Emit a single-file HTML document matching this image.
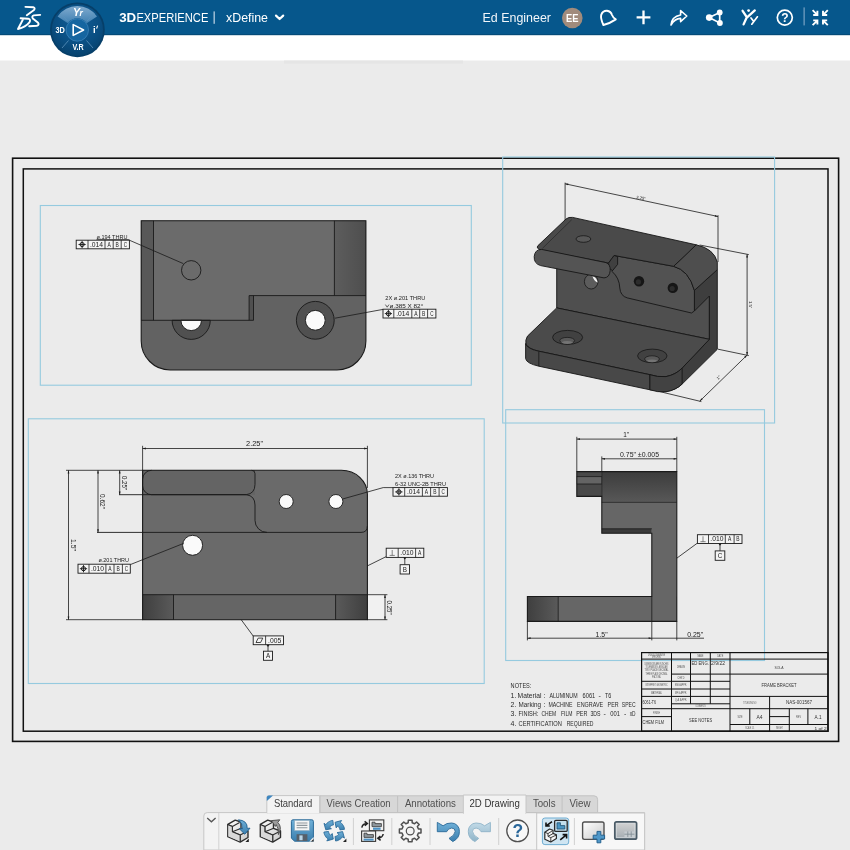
<!DOCTYPE html>
<html><head><meta charset="utf-8"><title>3DEXPERIENCE xDefine</title>
<style>
html,body{margin:0;padding:0;background:#ebebeb;}
body{width:850px;height:850px;overflow:hidden;font-family:'Liberation Sans', sans-serif;}
svg{display:block;}
svg text{font-family:'Liberation Sans', sans-serif;}
svg text.m{font-family:'Liberation Mono',monospace;}
</style></head><body>
<svg width="850" height="850" viewBox="0 0 850 850" style="will-change:transform">
<defs><radialGradient id="cg" cx="50%" cy="35%" r="70%"><stop offset="0" stop-color="#115c95"/><stop offset="0.6" stop-color="#0a4f83"/><stop offset="1" stop-color="#06406b"/></radialGradient><linearGradient id="ctop" x1="0" y1="0" x2="0" y2="1"><stop offset="0" stop-color="#8db4d6"/><stop offset="1" stop-color="#4585b6"/></linearGradient><linearGradient id="dk" x1="0" y1="0" x2="1" y2="0"><stop offset="0" stop-color="#3f3f3f"/><stop offset="1" stop-color="#5a5a5a"/></linearGradient><linearGradient id="dk2" x1="0" y1="0" x2="1" y2="0"><stop offset="0" stop-color="#5a5a5a"/><stop offset="1" stop-color="#3f3f3f"/></linearGradient><linearGradient id="dkv" x1="0" y1="0" x2="0" y2="1"><stop offset="0" stop-color="#3c3c3c"/><stop offset="1" stop-color="#585858"/></linearGradient><linearGradient id="dk3" x1="0" y1="0" x2="1" y2="0"><stop offset="0" stop-color="#5d5d5d"/><stop offset="1" stop-color="#4e4e4e"/></linearGradient></defs>
<rect x="0" y="0" width="850" height="850" fill="#ebebeb"/>
<rect x="0" y="35" width="850" height="25.5" fill="#ffffff"/>
<rect x="0" y="0" width="850" height="35" fill="#06578c"/>
<rect x="0" y="34" width="850" height="1.2" fill="#044a78"/>
<g fill="none" stroke="#ffffff" stroke-width="1.9" stroke-linecap="round" stroke-linejoin="round"><path d="M25.4 6.9 L33.2 7.2 Q35.6 7.8 34 10 L26.8 15.2"/><path d="M40.2 14.9 L33.8 15.4 Q31.4 16.2 32.8 18.4 L37.8 22.4 Q39.8 25 36.8 25.7 L29.2 26.3"/><path d="M20.6 18.3 L28.2 18.7 Q31.2 19.6 29.4 22.4 Q25.6 27.2 18 29 L22.8 19.8"/></g>
<circle cx="77.4" cy="29.8" r="27.4" fill="#063f69"/>
<circle cx="77.4" cy="29.8" r="25.6" fill="url(#cg)"/>
<path d="M57.6 16.4 A24 24 0 0 1 97 16.4 L86.7 23.2 A11.5 11.5 0 0 0 67.9 23.2 Z" fill="url(#ctop)" opacity="0.9"/>
<path d="M60 13 L67.5 21 M94.5 13 L87 21 M62 48 L68.5 40.5 M93 48 L86.5 40.5" stroke="#5d93bd" stroke-width="0.8" fill="none"/>
<circle cx="77.3" cy="30" r="11.2" fill="#1565a0" stroke="#3b82b8" stroke-width="0.8"/>
<path d="M73.2 24.6 L83.6 30 L73.2 35.4 Z" fill="none" stroke="#ffffff" stroke-width="1.6" stroke-linejoin="round"/>
<text x="60.2" y="33.2" font-size="9.6" fill="#ffffff" text-anchor="middle" textLength="9.4" lengthAdjust="spacingAndGlyphs" font-weight="bold">3D</text>
<text x="94.4" y="33.2" font-size="9.6" fill="#ffffff" text-anchor="middle" font-weight="bold">i</text>
<path d="M96.6 28.6 L97.6 25.6" stroke="#fff" stroke-width="1.1"/>
<text x="76.6" y="15.6" font-size="10.5" fill="#ffffff" text-anchor="middle" font-weight="bold" font-style="italic">Y</text>
<text x="81.2" y="16.4" font-size="8.5" fill="#ffffff" text-anchor="middle" font-weight="bold" font-style="italic">r</text>
<text x="78.0" y="49.8" font-size="9.2" fill="#ffffff" text-anchor="middle" textLength="11.2" lengthAdjust="spacingAndGlyphs" font-weight="bold">V.R</text>
<text x="119.2" y="22.2" font-size="13" fill="#ffffff" textLength="17.0" lengthAdjust="spacingAndGlyphs" font-weight="bold">3D</text>
<text x="136.4" y="22.2" font-size="13" fill="#ffffff" textLength="72.0" lengthAdjust="spacingAndGlyphs">EXPERIENCE</text>
<rect x="213.6" y="11.4" width="1.1" height="12.4" fill="#d5e2ee"/>
<text x="226.0" y="22.2" font-size="13" fill="#ffffff" textLength="42.0" lengthAdjust="spacingAndGlyphs">xDefine</text>
<path d="M276 15.6 L279.6 19 L283.2 15.6" fill="none" stroke="#fff" stroke-width="2.2" stroke-linecap="round" stroke-linejoin="round"/>
<text x="482.5" y="22.3" font-size="12.6" fill="#f2f6fa" textLength="68.5" lengthAdjust="spacingAndGlyphs">Ed Engineer</text>
<circle cx="572.3" cy="18" r="10.3" fill="#a18b7c"/>
<text x="572.3" y="22.0" font-size="10.5" fill="#ffffff" text-anchor="middle" textLength="12.5" lengthAdjust="spacingAndGlyphs" font-weight="bold">EE</text>
<path d="M603.4 25 Q600.4 18.6 601.2 14.8 Q602.8 10.6 607 10.8 Q611 11.4 612 15 Q613.2 18 615.8 19.4 Q610 23.4 603.4 25 Z" fill="none" stroke="#fff" stroke-width="1.9" stroke-linejoin="round"/>
<path d="M636.6 17.4 H650.4 M643.5 10.5 V24.3" stroke="#fff" stroke-width="2.3" fill="none"/>
<path d="M671 25 Q671.6 16.6 680.6 15 L680.6 10.6 L686.8 16 L680.6 21.6 L680.6 18.4 Q674.6 18.6 671 25 Z" fill="none" stroke="#fff" stroke-width="1.6" stroke-linejoin="round"/>
<path d="M709.2 17.6 L719.7 12.6 L719.7 22.9 Z" stroke="#fff" stroke-width="1.7" fill="none"/>
<circle cx="709.2" cy="17.6" r="3.3" fill="#fff"/><circle cx="719.7" cy="12.4" r="2.9" fill="#fff"/><circle cx="719.9" cy="23" r="2.9" fill="#fff"/>
<g fill="none" stroke="#fff" stroke-linecap="round" stroke-linejoin="round"><path d="M742.6 10.8 L746.8 17.2 L743.6 24.4 M754.8 10.4 L746.8 17.6" stroke-width="2.3"/><path d="M751 18 L753.2 20.8 M757.4 16.8 L751.8 24.2" stroke-width="1.7"/></g>
<circle cx="748.6" cy="10.6" r="1.4" fill="#fff"/>
<circle cx="784.8" cy="17.6" r="7.5" fill="none" stroke="#fff" stroke-width="1.7"/>
<text x="784.8" y="22.0" font-size="12" fill="#fff" text-anchor="middle" font-weight="bold">?</text>
<rect x="803.6" y="7.4" width="1" height="18" fill="#8fb2cf"/>
<g stroke="#fff" stroke-width="1.9" fill="none"><path d="M812.6 10.2 L817 14.6 M813.2 15 H817.4 V10.8"/><path d="M827.8 10.2 L823.4 14.6 M827.2 15 H823 V10.8"/><path d="M812.6 25.2 L817 20.8 M813.2 20.4 H817.4 V24.6"/><path d="M827.8 25.2 L823.4 20.8 M827.2 20.4 H823 V24.6"/></g>
<rect x="284.0" y="60.5" width="179.0" height="3.1" fill="#e5e5e5" stroke="none" stroke-width="0.8"/>
<rect x="12.6" y="158.2" width="826.0" height="583.2" fill="none" stroke="#111" stroke-width="1.6"/>
<rect x="23.3" y="168.9" width="804.7" height="562.3" fill="none" stroke="#111" stroke-width="1.5"/>
<rect x="40.3" y="205.5" width="431.0" height="179.7" fill="none" stroke="#95cadf" stroke-width="1.1"/>
<rect x="28.3" y="418.8" width="455.9" height="264.7" fill="none" stroke="#95cadf" stroke-width="1.1"/>
<rect x="502.7" y="157.0" width="271.9" height="266.0" fill="none" stroke="#95cadf" stroke-width="1.1"/>
<rect x="505.7" y="409.7" width="258.8" height="250.8" fill="none" stroke="#95cadf" stroke-width="1.1"/>
<g>
<path d="M141.2 220.8 H365.9 V341 A29 29 0 0 1 336.9 370 H170.2 A29 29 0 0 1 141.2 341 Z" fill="#626262"/>
<path d="M141.2 220.8 H365.9 V295.6 H253.5 V320.3 H141.2 Z" fill="#6b6b6b"/>
<rect x="141.2" y="220.8" width="12.3" height="99.5" fill="#585858" stroke="none" stroke-width="0.8"/>
<rect x="334.4" y="220.8" width="31.5" height="74.8" fill="url(#dk3)" stroke="none" stroke-width="0.8"/>
<rect x="249.1" y="295.6" width="4.4" height="24.7" fill="#505050" stroke="none" stroke-width="0.8"/>
<path d="M172.1 320.3 A19.1 19.1 0 0 0 210.3 320.3 Z" fill="#505050" stroke="#1a1a1a" stroke-width="0.9"/>
<path d="M180.9 320.3 A10.3 10.3 0 0 0 201.5 320.3 Z" fill="#fafafa" stroke="#1a1a1a" stroke-width="0.9"/>
<circle cx="315.3" cy="320.3" r="18.9" fill="#505050" stroke="#1a1a1a" stroke-width="0.9"/>
<circle cx="315.3" cy="320.3" r="9.9" fill="#fafafa" stroke="#1a1a1a" stroke-width="0.9"/>
<path d="M141.2 220.8 H365.9 V341 A29 29 0 0 1 336.9 370 H170.2 A29 29 0 0 1 141.2 341 Z" fill="none" stroke="#1a1a1a" stroke-width="1.1"/>
<path d="M153.5 220.8 V320.3 M141.2 320.3 H249.1 V295.6 H365.9 M253.5 295.6 V320.3 H249.1 M334.4 220.8 V295.6" fill="none" stroke="#1a1a1a" stroke-width="0.9"/>
<circle cx="191.2" cy="270.3" r="9.7" fill="#6b6b6b" stroke="#1a1a1a" stroke-width="0.9"/>
<text x="96.5" y="238.6" font-size="6.2" fill="#222" textLength="31.0" lengthAdjust="spacingAndGlyphs">ø.194 THRU</text>
<line x1="96.5" y1="239.6" x2="128.0" y2="239.6" stroke="#1a1a1a" stroke-width="0.7"/>
<line x1="128.0" y1="239.6" x2="183.3" y2="263.6" stroke="#1a1a1a" stroke-width="0.8"/>
<rect x="76.2" y="240.2" width="53.2" height="8.6" fill="#f4f4f4" stroke="#1a1a1a" stroke-width="0.9"/>
<line x1="88.0" y1="240.2" x2="88.0" y2="248.8" stroke="#1a1a1a" stroke-width="0.8"/>
<line x1="105.0" y1="240.2" x2="105.0" y2="248.8" stroke="#1a1a1a" stroke-width="0.8"/>
<line x1="113.2" y1="240.2" x2="113.2" y2="248.8" stroke="#1a1a1a" stroke-width="0.8"/>
<line x1="121.2" y1="240.2" x2="121.2" y2="248.8" stroke="#1a1a1a" stroke-width="0.8"/>
<circle cx="82.1" cy="244.5" r="2.1" fill="none" stroke="#1a1a1a" stroke-width="1"/>
<line x1="78.5" y1="244.5" x2="85.7" y2="244.5" stroke="#1a1a1a" stroke-width="0.9"/>
<line x1="82.1" y1="240.9" x2="82.1" y2="248.1" stroke="#1a1a1a" stroke-width="0.9"/>
<text x="96.5" y="246.8" font-size="6.3" fill="#222" text-anchor="middle" textLength="13.2" lengthAdjust="spacingAndGlyphs">.014</text>
<text x="109.1" y="246.8" font-size="6.3" fill="#222" text-anchor="middle" textLength="3.3" lengthAdjust="spacingAndGlyphs">A</text>
<text x="117.2" y="246.8" font-size="6.3" fill="#222" text-anchor="middle" textLength="3.3" lengthAdjust="spacingAndGlyphs">B</text>
<text x="125.3" y="246.8" font-size="6.3" fill="#222" text-anchor="middle" textLength="3.3" lengthAdjust="spacingAndGlyphs">C</text>
<text x="385.3" y="299.6" font-size="6.2" fill="#222" textLength="40.0" lengthAdjust="spacingAndGlyphs">2X ø.201 THRU</text>
<path d="M385.4 304.6 L387.2 307.2 L389 304.6" fill="none" stroke="#222" stroke-width="0.7"/>
<text x="389.6" y="307.6" font-size="6.2" fill="#222" textLength="33.6" lengthAdjust="spacingAndGlyphs">ø.385 X 82°</text>
<line x1="383.0" y1="309.4" x2="335.0" y2="318.2" stroke="#1a1a1a" stroke-width="0.8"/>
<rect x="383.0" y="309.2" width="52.9" height="8.8" fill="#f4f4f4" stroke="#1a1a1a" stroke-width="0.9"/>
<line x1="393.8" y1="309.2" x2="393.8" y2="318.0" stroke="#1a1a1a" stroke-width="0.8"/>
<line x1="411.8" y1="309.2" x2="411.8" y2="318.0" stroke="#1a1a1a" stroke-width="0.8"/>
<line x1="419.7" y1="309.2" x2="419.7" y2="318.0" stroke="#1a1a1a" stroke-width="0.8"/>
<line x1="427.6" y1="309.2" x2="427.6" y2="318.0" stroke="#1a1a1a" stroke-width="0.8"/>
<circle cx="388.4" cy="313.6" r="2.1" fill="none" stroke="#1a1a1a" stroke-width="1"/>
<line x1="384.8" y1="313.6" x2="392.0" y2="313.6" stroke="#1a1a1a" stroke-width="0.9"/>
<line x1="388.4" y1="310.0" x2="388.4" y2="317.2" stroke="#1a1a1a" stroke-width="0.9"/>
<text x="402.8" y="315.9" font-size="6.3" fill="#222" text-anchor="middle" textLength="13.2" lengthAdjust="spacingAndGlyphs">.014</text>
<text x="415.8" y="315.9" font-size="6.3" fill="#222" text-anchor="middle" textLength="3.3" lengthAdjust="spacingAndGlyphs">A</text>
<text x="423.6" y="315.9" font-size="6.3" fill="#222" text-anchor="middle" textLength="3.3" lengthAdjust="spacingAndGlyphs">B</text>
<text x="431.8" y="315.9" font-size="6.3" fill="#222" text-anchor="middle" textLength="3.3" lengthAdjust="spacingAndGlyphs">C</text>
</g>
<g>
<path d="M142.6 470.3 H341.4 A26 24 0 0 1 367.4 494.3 V619.7 H142.6 Z" fill="#6a6a6a"/>
<rect x="142.6" y="470.3" width="112.4" height="24.4" fill="#646464" stroke="none" stroke-width="0.8"/>
<rect x="142.6" y="594.7" width="224.8" height="25.0" fill="#656565" stroke="none" stroke-width="0.8"/>
<rect x="142.6" y="594.7" width="30.9" height="25.0" fill="url(#dk)" stroke="none" stroke-width="0.8"/>
<rect x="335.6" y="594.7" width="31.8" height="25.0" fill="url(#dk2)" stroke="none" stroke-width="0.8"/>
<rect x="367.4" y="594.7" width="17.6" height="25.0" fill="#f1f1f1" stroke="none" stroke-width="0.8"/>
<path d="M142.6 470.3 H341.4 A26 24 0 0 1 367.4 494.3 V619.7 H142.6 Z" fill="none" stroke="#1a1a1a" stroke-width="1.1"/>
<path d="M142.6 594.7 H367.4 M173.5 594.7 V619.7 M335.6 594.7 V619.7" fill="none" stroke="#1a1a1a" stroke-width="0.9"/>
<path d="M97 532.4 H361 Q367.4 532.4 367.4 526" fill="none" stroke="#1a1a1a" stroke-width="0.9"/>
<path d="M119 494.7 H246.2" fill="none" stroke="#1a1a1a" stroke-width="0.9"/>
<path d="M246.2 494.7 H151.6 A9 9 0 0 1 142.6 485.7 V479.3 A9 9 0 0 1 151.6 470.3" fill="none" stroke="#1a1a1a" stroke-width="0.9"/>
<path d="M251.6 470.3 Q255 470.3 255 473.7 V484.4 Q255 493.6 246.2 494.7 Q255 495.8 255 505 V520.4 A12 12 0 0 0 267 532.4" fill="none" stroke="#1a1a1a" stroke-width="0.9"/>
<circle cx="192.6" cy="545.3" r="10" fill="#fafafa" stroke="#1a1a1a" stroke-width="0.9"/>
<circle cx="286.2" cy="501.5" r="7" fill="#fafafa" stroke="#1a1a1a" stroke-width="0.9"/>
<circle cx="335.9" cy="501.5" r="7" fill="#fafafa" stroke="#1a1a1a" stroke-width="0.9"/>
<line x1="142.6" y1="445.8" x2="142.6" y2="470.3" stroke="#1a1a1a" stroke-width="0.8"/>
<line x1="367.4" y1="445.8" x2="367.4" y2="488.0" stroke="#1a1a1a" stroke-width="0.8"/>
<line x1="142.6" y1="448.5" x2="367.4" y2="448.5" stroke="#1a1a1a" stroke-width="0.8"/><path d="M142.6 448.5 L145.8 447.6 L145.8 449.4 Z" fill="#1a1a1a"/><path d="M367.4 448.5 L364.2 449.4 L364.2 447.6 Z" fill="#1a1a1a"/>
<text x="254.6" y="446.4" font-size="6.6" fill="#222" text-anchor="middle" textLength="17.0" lengthAdjust="spacingAndGlyphs">2.25"</text>
<line x1="66.0" y1="470.3" x2="142.6" y2="470.3" stroke="#1a1a1a" stroke-width="0.8"/>
<line x1="66.0" y1="619.7" x2="142.6" y2="619.7" stroke="#1a1a1a" stroke-width="0.8"/>
<line x1="68.5" y1="470.3" x2="68.5" y2="619.7" stroke="#1a1a1a" stroke-width="0.8"/><path d="M68.5 470.3 L69.4 473.5 L67.6 473.5 Z" fill="#1a1a1a"/><path d="M68.5 619.7 L67.6 616.5 L69.4 616.5 Z" fill="#1a1a1a"/>
<text x="70.6" y="545.0" font-size="6.4" fill="#222" text-anchor="middle" textLength="12.0" lengthAdjust="spacingAndGlyphs" transform="rotate(90 70.6 545.0)">1.5"</text>
<line x1="98.0" y1="470.3" x2="98.0" y2="532.4" stroke="#1a1a1a" stroke-width="0.8"/><path d="M98.0 470.3 L98.9 473.5 L97.1 473.5 Z" fill="#1a1a1a"/><path d="M98.0 532.4 L97.1 529.2 L98.9 529.2 Z" fill="#1a1a1a"/>
<text x="100.4" y="501.5" font-size="6.4" fill="#222" text-anchor="middle" textLength="15.0" lengthAdjust="spacingAndGlyphs" transform="rotate(90 100.4 501.5)">0.62"</text>
<line x1="119.7" y1="470.3" x2="119.7" y2="494.7" stroke="#1a1a1a" stroke-width="0.8"/><path d="M119.7 470.3 L120.6 473.5 L118.8 473.5 Z" fill="#1a1a1a"/><path d="M119.7 494.7 L118.8 491.5 L120.6 491.5 Z" fill="#1a1a1a"/>
<text x="122.0" y="483.0" font-size="6.4" fill="#222" text-anchor="middle" textLength="14.0" lengthAdjust="spacingAndGlyphs" transform="rotate(90 122.0 483.0)">0.25"</text>
<line x1="367.4" y1="594.7" x2="387.4" y2="594.7" stroke="#1a1a1a" stroke-width="0.8"/>
<line x1="367.4" y1="619.7" x2="387.4" y2="619.7" stroke="#1a1a1a" stroke-width="0.8"/>
<line x1="385.0" y1="594.7" x2="385.0" y2="619.7" stroke="#1a1a1a" stroke-width="0.8"/><path d="M385.0 594.7 L385.9 597.9 L384.1 597.9 Z" fill="#1a1a1a"/><path d="M385.0 619.7 L384.1 616.5 L385.9 616.5 Z" fill="#1a1a1a"/>
<text x="387.4" y="607.6" font-size="6.4" fill="#222" text-anchor="middle" textLength="14.0" lengthAdjust="spacingAndGlyphs" transform="rotate(90 387.4 607.6)">0.25"</text>
<text x="98.5" y="562.4" font-size="6.2" fill="#222" textLength="30.5" lengthAdjust="spacingAndGlyphs">ø.201 THRU</text>
<line x1="130.3" y1="564.6" x2="183.6" y2="543.4" stroke="#1a1a1a" stroke-width="0.8"/>
<rect x="78.0" y="564.2" width="52.3" height="9.0" fill="#f4f4f4" stroke="#1a1a1a" stroke-width="0.9"/>
<line x1="89.0" y1="564.2" x2="89.0" y2="573.2" stroke="#1a1a1a" stroke-width="0.8"/>
<line x1="105.9" y1="564.2" x2="105.9" y2="573.2" stroke="#1a1a1a" stroke-width="0.8"/>
<line x1="114.0" y1="564.2" x2="114.0" y2="573.2" stroke="#1a1a1a" stroke-width="0.8"/>
<line x1="122.4" y1="564.2" x2="122.4" y2="573.2" stroke="#1a1a1a" stroke-width="0.8"/>
<circle cx="83.5" cy="568.7" r="2.1" fill="none" stroke="#1a1a1a" stroke-width="1"/>
<line x1="79.9" y1="568.7" x2="87.1" y2="568.7" stroke="#1a1a1a" stroke-width="0.9"/>
<line x1="83.5" y1="565.1" x2="83.5" y2="572.3" stroke="#1a1a1a" stroke-width="0.9"/>
<text x="97.5" y="571.0" font-size="6.3" fill="#222" text-anchor="middle" textLength="13.2" lengthAdjust="spacingAndGlyphs">.010</text>
<text x="110.0" y="571.0" font-size="6.3" fill="#222" text-anchor="middle" textLength="3.3" lengthAdjust="spacingAndGlyphs">A</text>
<text x="118.2" y="571.0" font-size="6.3" fill="#222" text-anchor="middle" textLength="3.3" lengthAdjust="spacingAndGlyphs">B</text>
<text x="126.4" y="571.0" font-size="6.3" fill="#222" text-anchor="middle" textLength="3.3" lengthAdjust="spacingAndGlyphs">C</text>
<line x1="241.2" y1="619.7" x2="253.2" y2="636.0" stroke="#1a1a1a" stroke-width="0.8"/>
<rect x="253.2" y="635.9" width="30.3" height="8.8" fill="#f4f4f4" stroke="#1a1a1a" stroke-width="0.9"/>
<line x1="265.6" y1="635.9" x2="265.6" y2="644.7" stroke="#1a1a1a" stroke-width="0.8"/>
<path d="M256.0 642.5 L258.2 638.1 L262.8 638.1 L260.6 642.5 Z" fill="none" stroke="#1a1a1a" stroke-width="0.8"/>
<text x="274.6" y="642.6" font-size="6.3" fill="#222" text-anchor="middle" textLength="13.2" lengthAdjust="spacingAndGlyphs">.005</text>
<line x1="268.0" y1="644.7" x2="268.0" y2="651.2" stroke="#1a1a1a" stroke-width="0.8"/>
<path d="M266.4 644.7 L269.6 644.7 L268.0 646.9 Z" fill="#1a1a1a"/>
<rect x="263.5" y="651.2" width="9.0" height="9.1" fill="#f4f4f4" stroke="#1a1a1a" stroke-width="0.9"/>
<text x="268.0" y="658.0" font-size="6.3" fill="#222" text-anchor="middle">A</text>
<text x="395.0" y="478.2" font-size="6.2" fill="#222" textLength="39.0" lengthAdjust="spacingAndGlyphs">2X ø.136 THRU</text>
<text x="395.0" y="486.2" font-size="6.2" fill="#222" textLength="51.0" lengthAdjust="spacingAndGlyphs">6-32 UNC-2B THRU</text>
<line x1="393.0" y1="487.6" x2="383.2" y2="487.6" stroke="#1a1a1a" stroke-width="0.8"/>
<line x1="383.2" y1="487.6" x2="342.6" y2="499.0" stroke="#1a1a1a" stroke-width="0.8"/>
<rect x="393.0" y="487.6" width="54.4" height="8.6" fill="#f4f4f4" stroke="#1a1a1a" stroke-width="0.9"/>
<line x1="404.7" y1="487.6" x2="404.7" y2="496.2" stroke="#1a1a1a" stroke-width="0.8"/>
<line x1="422.4" y1="487.6" x2="422.4" y2="496.2" stroke="#1a1a1a" stroke-width="0.8"/>
<line x1="430.6" y1="487.6" x2="430.6" y2="496.2" stroke="#1a1a1a" stroke-width="0.8"/>
<line x1="439.1" y1="487.6" x2="439.1" y2="496.2" stroke="#1a1a1a" stroke-width="0.8"/>
<circle cx="398.9" cy="491.9" r="2.1" fill="none" stroke="#1a1a1a" stroke-width="1"/>
<line x1="395.2" y1="491.9" x2="402.5" y2="491.9" stroke="#1a1a1a" stroke-width="0.9"/>
<line x1="398.9" y1="488.3" x2="398.9" y2="495.5" stroke="#1a1a1a" stroke-width="0.9"/>
<text x="413.5" y="494.2" font-size="6.3" fill="#222" text-anchor="middle" textLength="13.2" lengthAdjust="spacingAndGlyphs">.014</text>
<text x="426.5" y="494.2" font-size="6.3" fill="#222" text-anchor="middle" textLength="3.3" lengthAdjust="spacingAndGlyphs">A</text>
<text x="434.9" y="494.2" font-size="6.3" fill="#222" text-anchor="middle" textLength="3.3" lengthAdjust="spacingAndGlyphs">B</text>
<text x="443.2" y="494.2" font-size="6.3" fill="#222" text-anchor="middle" textLength="3.3" lengthAdjust="spacingAndGlyphs">C</text>
<line x1="367.4" y1="565.9" x2="386.2" y2="556.6" stroke="#1a1a1a" stroke-width="0.8"/>
<rect x="386.2" y="548.2" width="37.6" height="9.2" fill="#f4f4f4" stroke="#1a1a1a" stroke-width="0.9"/>
<line x1="398.2" y1="548.2" x2="398.2" y2="557.4" stroke="#1a1a1a" stroke-width="0.8"/>
<line x1="415.6" y1="548.2" x2="415.6" y2="557.4" stroke="#1a1a1a" stroke-width="0.8"/>
<line x1="389.6" y1="555.4" x2="394.8" y2="555.4" stroke="#555" stroke-width="0.7"/>
<line x1="392.2" y1="550.0" x2="392.2" y2="555.4" stroke="#555" stroke-width="0.7"/>
<text x="406.9" y="555.1" font-size="6.3" fill="#222" text-anchor="middle" textLength="13.2" lengthAdjust="spacingAndGlyphs">.010</text>
<text x="419.7" y="555.1" font-size="6.3" fill="#222" text-anchor="middle" textLength="3.3" lengthAdjust="spacingAndGlyphs">A</text>
<line x1="404.8" y1="557.4" x2="404.8" y2="564.7" stroke="#1a1a1a" stroke-width="0.8"/>
<path d="M403.2 557.4 L406.4 557.4 L404.8 559.6 Z" fill="#1a1a1a"/>
<rect x="400.1" y="564.7" width="9.4" height="9.3" fill="#f4f4f4" stroke="#1a1a1a" stroke-width="0.9"/>
<text x="404.8" y="571.6" font-size="6.3" fill="#222" text-anchor="middle">B</text>
</g>
<g>
<rect x="576.8" y="471.6" width="25.0" height="24.8" fill="#494949" stroke="none" stroke-width="0.8"/>
<rect x="576.8" y="476.6" width="25.0" height="7.4" fill="#646464" stroke="none" stroke-width="0.8"/>
<rect x="601.8" y="471.6" width="75.0" height="30.8" fill="url(#dkv)" stroke="none" stroke-width="0.8"/>
<rect x="601.8" y="502.4" width="75.0" height="26.6" fill="#666666" stroke="none" stroke-width="0.8"/>
<rect x="651.8" y="529.0" width="25.0" height="92.4" fill="#666666" stroke="none" stroke-width="0.8"/>
<rect x="601.8" y="528.8" width="50.0" height="4.5" fill="#3a3a3a" stroke="none" stroke-width="0.8"/>
<rect x="527.4" y="596.5" width="149.4" height="24.9" fill="#666666" stroke="none" stroke-width="0.8"/>
<rect x="527.4" y="596.5" width="30.8" height="24.9" fill="url(#dk)" stroke="none" stroke-width="0.8"/>
<path d="M576.8 471.6 H676.8 V621.4 H527.4 V596.5 H651.8 V533.3 H601.8 V496.4 H576.8 Z" fill="none" stroke="#1a1a1a" stroke-width="1.1"/>
<path d="M576.8 476.6 H601.8 M576.8 484 H601.8 M601.8 471.6 V496.4 M601.8 502.4 H676.8 M601.8 528.8 H651.8 M558.2 596.5 V621.4 M651.8 596.5 V621.4" fill="none" stroke="#1a1a1a" stroke-width="0.8"/>
<line x1="576.8" y1="436.8" x2="576.8" y2="471.6" stroke="#1a1a1a" stroke-width="0.8"/>
<line x1="676.8" y1="436.8" x2="676.8" y2="471.6" stroke="#1a1a1a" stroke-width="0.8"/>
<line x1="601.8" y1="456.4" x2="601.8" y2="471.6" stroke="#1a1a1a" stroke-width="0.8"/>
<line x1="576.8" y1="439.1" x2="676.8" y2="439.1" stroke="#1a1a1a" stroke-width="0.8"/><path d="M576.8 439.1 L580.0 438.2 L580.0 440.0 Z" fill="#1a1a1a"/><path d="M676.8 439.1 L673.6 440.0 L673.6 438.2 Z" fill="#1a1a1a"/>
<text x="626.2" y="436.8" font-size="6.4" fill="#222" text-anchor="middle">1"</text>
<line x1="601.8" y1="458.8" x2="676.8" y2="458.8" stroke="#1a1a1a" stroke-width="0.8"/><path d="M601.8 458.8 L605.0 457.9 L605.0 459.7 Z" fill="#1a1a1a"/><path d="M676.8 458.8 L673.6 459.7 L673.6 457.9 Z" fill="#1a1a1a"/>
<text x="639.5" y="457.4" font-size="6.4" fill="#222" text-anchor="middle" textLength="39.0" lengthAdjust="spacingAndGlyphs">0.75" ±0.005</text>
<line x1="527.4" y1="621.4" x2="527.4" y2="640.4" stroke="#1a1a1a" stroke-width="0.8"/>
<line x1="651.8" y1="621.4" x2="651.8" y2="640.4" stroke="#1a1a1a" stroke-width="0.8"/>
<line x1="676.8" y1="621.4" x2="676.8" y2="640.4" stroke="#1a1a1a" stroke-width="0.8"/>
<line x1="527.4" y1="638.2" x2="651.8" y2="638.2" stroke="#1a1a1a" stroke-width="0.8"/><path d="M527.4 638.2 L530.6 637.3 L530.6 639.1 Z" fill="#1a1a1a"/><path d="M651.8 638.2 L648.6 639.1 L648.6 637.3 Z" fill="#1a1a1a"/>
<line x1="651.8" y1="638.2" x2="704.0" y2="638.2" stroke="#1a1a1a" stroke-width="0.8"/>
<text x="601.6" y="636.8" font-size="6.4" fill="#222" text-anchor="middle" textLength="12.0" lengthAdjust="spacingAndGlyphs">1.5"</text>
<text x="695.2" y="636.8" font-size="6.4" fill="#222" text-anchor="middle" textLength="16.0" lengthAdjust="spacingAndGlyphs">0.25"</text>
<line x1="676.8" y1="558.2" x2="697.4" y2="543.1" stroke="#1a1a1a" stroke-width="0.8"/>
<rect x="697.4" y="534.7" width="44.6" height="8.8" fill="#f4f4f4" stroke="#1a1a1a" stroke-width="0.9"/>
<line x1="708.5" y1="534.7" x2="708.5" y2="543.5" stroke="#1a1a1a" stroke-width="0.8"/>
<line x1="725.3" y1="534.7" x2="725.3" y2="543.5" stroke="#1a1a1a" stroke-width="0.8"/>
<line x1="734.1" y1="534.7" x2="734.1" y2="543.5" stroke="#1a1a1a" stroke-width="0.8"/>
<line x1="700.4" y1="541.7" x2="705.6" y2="541.7" stroke="#555" stroke-width="0.7"/>
<line x1="703.0" y1="536.3" x2="703.0" y2="541.7" stroke="#555" stroke-width="0.7"/>
<text x="716.9" y="541.4" font-size="6.3" fill="#222" text-anchor="middle" textLength="13.2" lengthAdjust="spacingAndGlyphs">.010</text>
<text x="729.7" y="541.4" font-size="6.3" fill="#222" text-anchor="middle" textLength="3.3" lengthAdjust="spacingAndGlyphs">A</text>
<text x="738.0" y="541.4" font-size="6.3" fill="#222" text-anchor="middle" textLength="3.3" lengthAdjust="spacingAndGlyphs">B</text>
<line x1="720.0" y1="543.5" x2="720.0" y2="550.9" stroke="#1a1a1a" stroke-width="0.8"/>
<path d="M718.4 543.5 L721.6 543.5 L720.0 545.7 Z" fill="#1a1a1a"/>
<rect x="715.2" y="550.9" width="9.6" height="9.4" fill="#f4f4f4" stroke="#1a1a1a" stroke-width="0.9"/>
<text x="720.0" y="557.9" font-size="6.3" fill="#222" text-anchor="middle">C</text>
</g>
<text y="688.4" font-size="7" fill="#2a2a2a"><tspan x="510.6" textLength="20.8" lengthAdjust="spacingAndGlyphs">NOTES:</tspan></text>
<text y="697.7" font-size="7" fill="#2a2a2a"><tspan x="510.6">1.</tspan> <tspan x="517.6" textLength="23.9" lengthAdjust="spacingAndGlyphs">Material</tspan> <tspan x="543.6">:</tspan> <tspan x="549.4" textLength="28.2" lengthAdjust="spacingAndGlyphs">ALUMINUM</tspan> <tspan x="582.6" textLength="12.7" lengthAdjust="spacingAndGlyphs">6061</tspan> <tspan x="598.4">-</tspan> <tspan x="605.0" textLength="6.4" lengthAdjust="spacingAndGlyphs">T6</tspan></text>
<text y="707.0" font-size="7" fill="#2a2a2a"><tspan x="510.6">2.</tspan> <tspan x="518.5" textLength="22.5" lengthAdjust="spacingAndGlyphs">Marking</tspan> <tspan x="543.6">:</tspan> <tspan x="548.5" textLength="23.9" lengthAdjust="spacingAndGlyphs">MACHINE</tspan> <tspan x="577.1" textLength="26.1" lengthAdjust="spacingAndGlyphs">ENGRAVE</tspan> <tspan x="607.6" textLength="11.0" lengthAdjust="spacingAndGlyphs">PER</tspan> <tspan x="621.8" textLength="13.8" lengthAdjust="spacingAndGlyphs">SPEC</tspan></text>
<text y="716.3" font-size="7" fill="#2a2a2a"><tspan x="510.6">3.</tspan> <tspan x="518.5" textLength="19.9" lengthAdjust="spacingAndGlyphs">FINISH:</tspan> <tspan x="541.5" textLength="14.6" lengthAdjust="spacingAndGlyphs">CHEM</tspan> <tspan x="560.9" textLength="11.5" lengthAdjust="spacingAndGlyphs">FILM</tspan> <tspan x="576.2" textLength="11.2" lengthAdjust="spacingAndGlyphs">PER</tspan> <tspan x="590.4" textLength="10.2" lengthAdjust="spacingAndGlyphs">3DS</tspan> <tspan x="603.6">-</tspan> <tspan x="610.3" textLength="9.7" lengthAdjust="spacingAndGlyphs">001</tspan> <tspan x="624.0">-</tspan> <tspan x="629.7" textLength="5.9" lengthAdjust="spacingAndGlyphs">xD</tspan></text>
<text y="725.7" font-size="7" fill="#2a2a2a"><tspan x="510.6">4.</tspan> <tspan x="518.5" textLength="43.3" lengthAdjust="spacingAndGlyphs">CERTIFICATION</tspan> <tspan x="566.7" textLength="26.8" lengthAdjust="spacingAndGlyphs">REQUIRED</tspan></text>
<g stroke-linejoin="round">
<line x1="565.1" y1="182.6" x2="565.1" y2="222.0" stroke="#1a1a1a" stroke-width="0.8"/>
<line x1="718.0" y1="215.2" x2="718.0" y2="262.0" stroke="#1a1a1a" stroke-width="0.8"/>
<line x1="565.1" y1="183.8" x2="718.0" y2="216.5" stroke="#1a1a1a" stroke-width="0.8"/><path d="M565.1 183.8 L568.4 183.6 L568.0 185.3 Z" fill="#1a1a1a"/><path d="M718.0 216.5 L714.7 216.7 L715.1 215.0 Z" fill="#1a1a1a"/>
<text x="640.8" y="199.4" font-size="4.2" fill="#222" text-anchor="middle" transform="rotate(12 640.8 199.4)">2.25"</text>
<line x1="699.7" y1="245.0" x2="748.8" y2="254.6" stroke="#1a1a1a" stroke-width="0.8"/>
<line x1="718.0" y1="349.2" x2="748.8" y2="355.6" stroke="#1a1a1a" stroke-width="0.8"/>
<line x1="747.1" y1="254.3" x2="747.1" y2="355.1" stroke="#1a1a1a" stroke-width="0.8"/><path d="M747.1 254.3 L748.0 257.5 L746.2 257.5 Z" fill="#1a1a1a"/><path d="M747.1 355.1 L746.2 351.9 L748.0 351.9 Z" fill="#1a1a1a"/>
<text x="749.0" y="304.6" font-size="4.2" fill="#222" text-anchor="middle" transform="rotate(90 749.0 304.6)">1.5"</text>
<line x1="656.8" y1="390.9" x2="701.4" y2="401.6" stroke="#1a1a1a" stroke-width="0.8"/>
<line x1="699.7" y1="401.2" x2="747.1" y2="355.1" stroke="#1a1a1a" stroke-width="0.8"/><path d="M699.7 401.2 L701.4 398.3 L702.6 399.6 Z" fill="#1a1a1a"/><path d="M747.1 355.1 L745.4 358.0 L744.2 356.7 Z" fill="#1a1a1a"/>
<text x="719.6" y="378.6" font-size="4.2" fill="#222" text-anchor="middle" transform="rotate(-45 719.6 378.6)">1"</text>
<path d="M556.7 258 L616 262 L709.4 296 L709.4 339.3 L556.7 307.9 Z" fill="#4f4f4f" stroke="#161616" stroke-width="0.9"/>
<path d="M694.4 290.4 L717.3 269.6 L717.3 349.3 L682.1 384.1 Q676 390 666 391.6 L649.9 389.8 L649.9 374.7 L682.1 368.1 L709.4 339.3 L709.4 296 L694.4 311 Z" fill="#3e3e3e" stroke="#161616" stroke-width="0.9"/>
<path d="M556.7 307.9 L709.4 339.3 L682.1 368.1 Q676 374.6 666 376.6 Q657 377.2 649.9 374.7 L538.8 351.2 Q529 349 526 344.4 Q525 340 527.5 336.1 Z" fill="#4b4b4b" stroke="#161616" stroke-width="0.9"/>
<path d="M525.6 343.5 Q527 349 538.8 351.2 L649.9 374.7 L649.9 389.8 L538.8 366.2 Q526.5 363.4 525.6 358.6 Z" fill="#484848" stroke="#161616" stroke-width="0.9"/>
<path d="M649.9 374.7 Q657 377.2 666 376.6 Q676 374.6 682.1 368.1 L682.1 384.1 Q676 390 666 391.8 Q657 392.4 649.9 389.8 Z" fill="#424242" stroke="#161616" stroke-width="0.9"/>
<line x1="538.8" y1="351.2" x2="538.8" y2="366.2" stroke="#161616" stroke-width="0.8"/>
<ellipse cx="567.6" cy="337.4" rx="15" ry="7" fill="#414141" stroke="#161616" stroke-width="0.8"/>
<ellipse cx="567.2" cy="340.6" rx="7.4" ry="3.2" fill="#5a5a5a" stroke="#161616" stroke-width="0.7"/>
<path d="M561 342.4 Q567.2 339.6 573.4 342.4 Q567.2 345.4 561 342.4 Z" fill="#747474"/>
<ellipse cx="652.3" cy="355.9" rx="14.7" ry="6.8" fill="#414141" stroke="#161616" stroke-width="0.8"/>
<ellipse cx="652" cy="359" rx="7.4" ry="3.2" fill="#5a5a5a" stroke="#161616" stroke-width="0.7"/>
<path d="M645.8 360.8 Q652 358 658.2 360.8 Q652 363.8 645.8 360.8 Z" fill="#747474"/>
<ellipse cx="591.2" cy="281.6" rx="6.8" ry="7.4" fill="#5c5c5c" stroke="#161616" stroke-width="0.8"/>
<path d="M592.4 276.2 Q597 277.4 597.6 282.4 Q594.4 281.4 592.4 276.2 Z" fill="#f4f4f4"/>
<path d="M614.1 255.5 L673.6 266.3 Q689 270.4 694.4 290.4 L694.4 311 L691.5 313 L627.3 297.9 Q620.4 296 619.8 288 Q619.4 278 612.2 271.6 Z" fill="#525252" stroke="#161616" stroke-width="0.9"/>
<circle cx="639" cy="281.3" r="5.2" fill="#161616"/><circle cx="672.8" cy="287.9" r="5.2" fill="#161616"/>
<circle cx="638.4" cy="281.9" r="2.6" fill="#2c2c2c"/><circle cx="672.2" cy="288.5" r="2.6" fill="#2c2c2c"/>
<path d="M696.2 244.8 Q714 248.6 717.3 262.1 L717.3 269.6 L694.4 290.4 Q689 270.4 673.6 266.3 Z" fill="#4e4e4e" stroke="#161616" stroke-width="0.9"/>
<path d="M572.6 217.4 L696.2 244.8 L673.6 266.3 L614.1 255.5 L608.5 263.1 L541 250 Q535.6 248.4 538 245.6 L566 219 Q568.6 216.8 572.6 217.4 Z" fill="#4a4a4a" stroke="#161616" stroke-width="0.9"/>
<line x1="571.8" y1="219.6" x2="542.4" y2="248.4" stroke="#262626" stroke-width="0.7"/>
<ellipse cx="583.4" cy="239" rx="7.4" ry="3.3" fill="#585858" stroke="#161616" stroke-width="0.8"/>
<path d="M608.5 263.1 L614.1 255.5 L617.6 256.6 L617.6 264.4 L612.6 270.6 L609.4 268.6 Z" fill="#404040" stroke="#161616" stroke-width="0.9"/>
<path d="M541.6 249.4 L606 262.6 Q610.6 264.4 610.2 270.6 Q609.6 277.6 604 277.9 L540.6 265.6 Q533.8 263.6 534.2 256.6 Q534.8 249.4 541.6 249.4 Z" fill="#545454" stroke="#161616" stroke-width="0.9"/>
</g>
<g>
<rect x="641.6" y="652.6" width="186.4" height="78.6" fill="none" stroke="#111" stroke-width="1.2"/>
<path d="M671.5 652.6 V731.2 M690.5 652.6 V703.8 M710.3 652.6 V703.8 M730.0 652.6 V731.2 M641.6 659.1 H671.5 M641.6 681.3 H671.5 M641.6 689.0 H671.5 M641.6 696.4 H671.5 M641.6 708.7 H671.5 M641.6 716.6 H671.5 M671.5 659.1 H730.0 M671.5 674.1 H730.0 M671.5 681.3 H730.0 M671.5 689.0 H730.0 M671.5 696.4 H730.0 M671.5 703.8 H730.0 M671.5 708.7 H730.0 M730.0 659.1 H828.0 M730.0 674.1 H828.0 M730.0 696.4 H828.0 M730.0 708.7 H828.0 M730.0 724.5 H828.0 M769.6 696.4 V731.2 M749.8 708.7 V724.5 M789.3 708.7 V731.2 M807.9 708.7 V724.5 M769.6 716.6 H789.3" fill="none" stroke="#111" stroke-width="1"/>
<text x="656.5" y="655.6" font-size="2.6" fill="#555" text-anchor="middle" textLength="17.0" lengthAdjust="spacingAndGlyphs">UNLESS OTHERWISE</text>
<text x="656.5" y="658.2" font-size="2.6" fill="#555" text-anchor="middle" textLength="9.0" lengthAdjust="spacingAndGlyphs">SPECIFIED</text>
<text x="656.5" y="664.6" font-size="2.6" fill="#555" text-anchor="middle" textLength="24.0" lengthAdjust="spacingAndGlyphs">DIMENSIONS ARE IN INCHES</text>
<text x="656.5" y="668.0" font-size="2.6" fill="#555" text-anchor="middle" textLength="22.0" lengthAdjust="spacingAndGlyphs">TOLERANCES: ANGULAR</text>
<text x="656.5" y="671.4" font-size="2.6" fill="#555" text-anchor="middle" textLength="24.0" lengthAdjust="spacingAndGlyphs">TWO PLACE DECIMAL</text>
<text x="656.5" y="674.8" font-size="2.6" fill="#555" text-anchor="middle" textLength="22.0" lengthAdjust="spacingAndGlyphs">THREE PLACE DECIMAL</text>
<text x="656.5" y="678.2" font-size="2.6" fill="#555" text-anchor="middle" textLength="9.0" lengthAdjust="spacingAndGlyphs">FRACTIONAL</text>
<text x="656.5" y="686.4" font-size="2.6" fill="#555" text-anchor="middle" textLength="22.0" lengthAdjust="spacingAndGlyphs">INTERPRET GEOMETRIC</text>
<text x="656.5" y="693.8" font-size="2.6" fill="#555" text-anchor="middle" textLength="11.0" lengthAdjust="spacingAndGlyphs">MATERIAL</text>
<text x="642.6" y="703.6" font-size="4.6" fill="#333" textLength="13.5" lengthAdjust="spacingAndGlyphs">6061-T6</text>
<text x="656.5" y="713.8" font-size="2.6" fill="#555" text-anchor="middle" textLength="7.0" lengthAdjust="spacingAndGlyphs">FINISH</text>
<text x="642.6" y="724.2" font-size="5" fill="#333" textLength="21.5" lengthAdjust="spacingAndGlyphs">CHEM FILM</text>
<text x="700.4" y="657.2" font-size="2.8" fill="#555" text-anchor="middle" textLength="6.0" lengthAdjust="spacingAndGlyphs">NAME</text>
<text x="720.2" y="657.2" font-size="2.8" fill="#555" text-anchor="middle" textLength="6.0" lengthAdjust="spacingAndGlyphs">DATE</text>
<text x="681.0" y="668.0" font-size="2.8" fill="#555" text-anchor="middle" textLength="8.0" lengthAdjust="spacingAndGlyphs">DRAWN</text>
<text x="691.4" y="664.8" font-size="5" fill="#333" textLength="17.5" lengthAdjust="spacingAndGlyphs">ED ENG.</text>
<text x="711.0" y="664.8" font-size="5" fill="#333" textLength="14.0" lengthAdjust="spacingAndGlyphs">2/9/22</text>
<text x="681.0" y="678.8" font-size="2.8" fill="#555" text-anchor="middle" textLength="7.0" lengthAdjust="spacingAndGlyphs">CHK'D</text>
<text x="681.0" y="686.4" font-size="2.8" fill="#555" text-anchor="middle" textLength="12.0" lengthAdjust="spacingAndGlyphs">ENG APPR.</text>
<text x="681.0" y="693.8" font-size="2.8" fill="#555" text-anchor="middle" textLength="12.0" lengthAdjust="spacingAndGlyphs">MFG APPR.</text>
<text x="681.0" y="701.4" font-size="2.8" fill="#555" text-anchor="middle" textLength="12.0" lengthAdjust="spacingAndGlyphs">Q.A. APPR.</text>
<text x="700.6" y="707.4" font-size="2.8" fill="#555" text-anchor="middle" textLength="10.0" lengthAdjust="spacingAndGlyphs">COMMENTS</text>
<text x="700.6" y="722.0" font-size="5" fill="#333" text-anchor="middle" textLength="23.0" lengthAdjust="spacingAndGlyphs">SEE NOTES</text>
<text x="779.0" y="668.6" font-size="4" fill="#444" text-anchor="middle" textLength="9.0" lengthAdjust="spacingAndGlyphs">SOLA</text>
<text x="779.0" y="687.2" font-size="5" fill="#333" text-anchor="middle" textLength="35.0" lengthAdjust="spacingAndGlyphs">FRAME BRACKET</text>
<text x="749.8" y="703.6" font-size="2.8" fill="#555" text-anchor="middle" textLength="13.0" lengthAdjust="spacingAndGlyphs">TITLE/DWG NO</text>
<text x="799.0" y="704.4" font-size="5" fill="#333" text-anchor="middle" textLength="26.0" lengthAdjust="spacingAndGlyphs">NAS-001567</text>
<text x="740.0" y="717.8" font-size="2.8" fill="#555" text-anchor="middle" textLength="5.0" lengthAdjust="spacingAndGlyphs">SIZE</text>
<text x="759.6" y="718.6" font-size="5" fill="#333" text-anchor="middle" textLength="6.0" lengthAdjust="spacingAndGlyphs">A4</text>
<text x="798.6" y="717.8" font-size="2.8" fill="#555" text-anchor="middle" textLength="5.0" lengthAdjust="spacingAndGlyphs">REV</text>
<text x="818.0" y="718.6" font-size="5" fill="#333" text-anchor="middle" textLength="7.0" lengthAdjust="spacingAndGlyphs">A.1</text>
<text x="749.8" y="729.0" font-size="2.8" fill="#555" text-anchor="middle" textLength="9.0" lengthAdjust="spacingAndGlyphs">SCALE 1:1</text>
<text x="779.4" y="729.0" font-size="2.8" fill="#555" text-anchor="middle" textLength="7.0" lengthAdjust="spacingAndGlyphs">WEIGHT</text>
<text x="826.6" y="729.8" font-size="4.4" fill="#333" text-anchor="end" textLength="12.0" lengthAdjust="spacingAndGlyphs">1 of 2</text>
</g>
<defs><linearGradient id="bl" x1="0" y1="0" x2="0" y2="1"><stop offset="0" stop-color="#6fb0d8"/><stop offset="1" stop-color="#3b7fae"/></linearGradient><linearGradient id="bl2" x1="0" y1="0" x2="0" y2="1"><stop offset="0" stop-color="#c3dbe8"/><stop offset="1" stop-color="#8fb4c8"/></linearGradient><linearGradient id="gy" x1="0" y1="0" x2="1" y2="1"><stop offset="0" stop-color="#ffffff"/><stop offset="1" stop-color="#c9c9c9"/></linearGradient><linearGradient id="gy2" x1="0" y1="0" x2="0" y2="1"><stop offset="0" stop-color="#d4d4d4"/><stop offset="1" stop-color="#a3abb1"/></linearGradient></defs>
<g>
<path d="M203.8 850 V816 Q203.8 812.6 207.2 812.6 H644.6 V850 Z" fill="#f3f3f3" stroke="#c6c6c6" stroke-width="1"/>
<path d="M320 812.6 V795.8 H594 Q597.6 795.8 597.6 799.4 V812.6 Z" fill="#d7d7d7" stroke="#c2c2c2" stroke-width="1"/>
<line x1="397.6" y1="796.0" x2="397.6" y2="812.4" stroke="#c2c2c2" stroke-width="1"/>
<line x1="562.1" y1="796.0" x2="562.1" y2="812.4" stroke="#c2c2c2" stroke-width="1"/>
<path d="M266.8 812.9 V797.6 Q266.8 795.6 268.8 795.6 H319.6 V812.9 Z" fill="#f3f3f3" stroke="#c6c6c6" stroke-width="1"/>
<path d="M266.8 801 V797.4 Q266.8 795.4 268.8 795.4 H273 Z" fill="#3d86c0"/>
<path d="M463.3 813.2 V795 H526 V813.2 Z" fill="#f3f3f3" stroke="#c6c6c6" stroke-width="1"/>
<rect x="464.0" y="811.8" width="61.4" height="2.2" fill="#f3f3f3" stroke="none" stroke-width="0.8"/>
<rect x="267.4" y="811.8" width="51.6" height="1.6" fill="#f3f3f3" stroke="none" stroke-width="0.8"/>
<text x="293.1" y="807.4" font-size="10.6" fill="#3c3c3c" text-anchor="middle" textLength="38.4" lengthAdjust="spacingAndGlyphs">Standard</text>
<text x="358.6" y="807.4" font-size="10.6" fill="#4f4f4f" text-anchor="middle" textLength="64.0" lengthAdjust="spacingAndGlyphs">Views Creation</text>
<text x="430.4" y="807.4" font-size="10.6" fill="#4f4f4f" text-anchor="middle" textLength="51.0" lengthAdjust="spacingAndGlyphs">Annotations</text>
<text x="494.6" y="807.4" font-size="10.6" fill="#333" text-anchor="middle" textLength="50.4" lengthAdjust="spacingAndGlyphs">2D Drawing</text>
<text x="544.2" y="807.4" font-size="10.6" fill="#4f4f4f" text-anchor="middle" textLength="22.6" lengthAdjust="spacingAndGlyphs">Tools</text>
<text x="580.0" y="807.4" font-size="10.6" fill="#4f4f4f" text-anchor="middle" textLength="21.0" lengthAdjust="spacingAndGlyphs">View</text>
<path d="M536.7 850 V813 H644.6 V850 Z" fill="#f7f7f7" stroke="#c6c6c6" stroke-width="1"/>
<line x1="218.8" y1="813.0" x2="218.8" y2="850.0" stroke="#d2d2d2" stroke-width="1"/>
<line x1="353.4" y1="818.0" x2="353.4" y2="845.0" stroke="#d0d0d0" stroke-width="1"/>
<line x1="391.8" y1="818.0" x2="391.8" y2="845.0" stroke="#d0d0d0" stroke-width="1"/>
<line x1="430.0" y1="818.0" x2="430.0" y2="845.0" stroke="#d0d0d0" stroke-width="1"/>
<line x1="498.7" y1="818.0" x2="498.7" y2="845.0" stroke="#d0d0d0" stroke-width="1"/>
<line x1="574.4" y1="818.0" x2="574.4" y2="845.0" stroke="#d0d0d0" stroke-width="1"/>
<path d="M207.2 818 L211.4 821.8 L215.6 818" fill="none" stroke="#555" stroke-width="1.3"/>
<g transform="translate(0,0)" stroke="#2e2e2e" stroke-width="1.4" stroke-linejoin="round"><path d="M227.8 824.4 L235.2 820.2 L241 822 L241 828.4 L248 831 L248 837.5 L240.2 842.1 L227.8 836.7 Z" fill="url(#gy)"/><path d="M227.8 824.4 L232.4 826.4 L232.4 831.8 L240.2 835.1 L240.2 842.1 M232.4 826.4 L239.6 822.4 M240.2 835.1 L248 831 M232.4 831.8 L240.6 828.4" fill="none" stroke-width="1.1"/><path d="M232.4 826.6 L232.4 831.8 L240.2 835.1 L240.2 841.6 L228.4 836.4 L228.4 825 Z" fill="#d9d9d9" stroke="none"/><path d="M227.8 824.4 L232.4 826.4 L232.4 831.8 L240.2 835.1 L240.2 842.1" fill="none" stroke-width="1.1"/></g>
<path d="M238.4 819.8 Q247.6 820.4 247.2 828.4 L250 828.2 L244.8 834.2 L239.2 828.6 L242.4 828.6 Q242.8 823.4 238.4 819.8 Z" fill="url(#bl)" stroke="#1f5f8d" stroke-width="0.9" stroke-linejoin="round"/>
<path d="M248.8 842 L248.8 838.6 L245.4 842 Z" fill="#222"/>
<g transform="translate(32.5,0)" stroke="#2e2e2e" stroke-width="1.4" stroke-linejoin="round"><path d="M227.8 824.4 L235.2 820.2 L241 822 L241 828.4 L248 831 L248 837.5 L240.2 842.1 L227.8 836.7 Z" fill="url(#gy)"/><path d="M227.8 824.4 L232.4 826.4 L232.4 831.8 L240.2 835.1 L240.2 842.1 M232.4 826.4 L239.6 822.4 M240.2 835.1 L248 831 M232.4 831.8 L240.6 828.4" fill="none" stroke-width="1.1"/><path d="M232.4 826.6 L232.4 831.8 L240.2 835.1 L240.2 841.6 L228.4 836.4 L228.4 825 Z" fill="#d9d9d9" stroke="none"/><path d="M227.8 824.4 L232.4 826.4 L232.4 831.8 L240.2 835.1 L240.2 842.1" fill="none" stroke-width="1.1"/></g>
<path d="M278.4 834.6 Q282.6 827 277.8 822.4 L279.8 819.8 L271.4 820.6 L275.4 826.4 L276.2 824.6 Q279 828.4 278.4 834.6 Z" fill="#9c9c9c" stroke="#4a4a4a" stroke-width="0.9" stroke-linejoin="round"/>
<path d="M291.4 821.4 Q291.4 819.8 293 819.8 H311.8 Q313.4 819.8 313.4 821.4 V841.2 H294.6 L291.4 838.2 Z" fill="url(#bl)" stroke="#2a6a98" stroke-width="1"/>
<rect x="294.6" y="820.4" width="14.8" height="10.2" fill="#f6f6f6" stroke="#8aa9bd" stroke-width="0.6"/>
<path d="M296.6 823 H307.4 M296.6 825.4 H307.4 M296.6 827.8 H307.4" stroke="#8d969c" stroke-width="1.1"/>
<rect x="296.6" y="834.2" width="10.8" height="6.8" fill="#56606a" stroke="none" stroke-width="0.8"/>
<rect x="299.4" y="835.4" width="3.2" height="4.8" fill="#b9d6e8" stroke="none" stroke-width="0.8"/>
<path d="M313.6 841.4 L313.6 837 L309.2 841.4 Z" fill="#f0f0f0"/>
<path d="M313.6 841.6 L313.6 839 L311 841.6 Z" fill="#222"/>
<g fill="url(#bl)" stroke="#2a6a98" stroke-width="0.9" stroke-linejoin="round"><path d="M335.6 841.0 L336.7 840.8 L337.8 840.5 L338.8 840.0 L339.7 839.5 L340.6 838.9 L341.4 838.2 L342.2 837.4 L342.6 836.8 L344.4 838.1 L342.6 831.6 L337.0 832.7 L338.9 834.1 L338.9 834.1 L338.5 834.6 L338.1 835.0 L337.6 835.4 L337.1 835.7 L336.6 836.0 L336.0 836.2 L335.4 836.4 L335.0 836.4 Z"/><path d="M323.9 832.1 L324.1 833.2 L324.4 834.3 L324.9 835.3 L325.4 836.2 L326.0 837.1 L326.7 837.9 L327.5 838.7 L328.1 839.1 L326.8 840.9 L333.3 839.1 L332.2 833.5 L330.8 835.4 L330.8 835.4 L330.3 835.0 L329.9 834.6 L329.5 834.1 L329.2 833.6 L328.9 833.1 L328.7 832.5 L328.5 831.9 L328.5 831.5 Z"/><path d="M332.8 820.4 L331.7 820.6 L330.6 820.9 L329.6 821.4 L328.7 821.9 L327.8 822.5 L327.0 823.2 L326.2 824.0 L325.8 824.6 L324.0 823.3 L325.8 829.8 L331.4 828.7 L329.5 827.3 L329.5 827.3 L329.9 826.8 L330.3 826.4 L330.8 826.0 L331.3 825.7 L331.8 825.4 L332.4 825.2 L333.0 825.0 L333.4 825.0 Z"/><path d="M344.5 829.3 L344.3 828.2 L344.0 827.1 L343.5 826.1 L343.0 825.2 L342.4 824.3 L341.7 823.5 L340.9 822.7 L340.3 822.3 L341.6 820.5 L335.1 822.3 L336.2 827.9 L337.6 826.0 L337.6 826.0 L338.1 826.4 L338.5 826.8 L338.9 827.3 L339.2 827.8 L339.5 828.3 L339.7 828.9 L339.9 829.5 L339.9 829.9 Z"/></g>
<path d="M346.4 842 L346.4 838.6 L343 842 Z" fill="#222"/>
<rect x="369.4" y="819.9" width="14.4" height="10.8" fill="#f1f1f1" stroke="#3a3a3a" stroke-width="1.1"/>
<rect x="373.0" y="827.6" width="7.6" height="2.2" fill="#4a90c4" stroke="none" stroke-width="0.8"/>
<path d="M372 822.2 H375 V823.6 H381.4 V826.6 H372 Z" fill="#8e979d" stroke="#3a3a3a" stroke-width="0.8"/>
<rect x="361.6" y="831.0" width="14.0" height="10.4" fill="#f1f1f1" stroke="#3a3a3a" stroke-width="1.1"/>
<rect x="363.6" y="838.6" width="10.0" height="2.0" fill="#4a90c4" stroke="none" stroke-width="0.8"/>
<path d="M364 833.2 H367 V834.6 H373.4 V837.4 H364 Z" fill="#8e979d" stroke="#3a3a3a" stroke-width="0.8"/>
<path d="M361.8 827.6 Q362.6 824 366.6 823.6 M364.6 821.4 L367.4 823.6 L364.8 825.8" fill="none" stroke="#222" stroke-width="1.5"/>
<path d="M383.2 834 Q382.6 837.6 378.4 838.2 M380.4 836 L377.8 838.2 L380.6 840.4" fill="none" stroke="#222" stroke-width="1.5"/>
<path d="M408.3 820.2 L412.1 820.2 L412.2 822.8 L414.6 823.8 L416.6 822.0 L419.2 824.6 L417.4 826.6 L418.4 829.0 L421.0 829.1 L421.0 832.9 L418.4 833.0 L417.4 835.4 L419.2 837.4 L416.6 840.0 L414.6 838.2 L412.2 839.2 L412.1 841.8 L408.3 841.8 L408.2 839.2 L405.8 838.2 L403.8 840.0 L401.2 837.4 L403.0 835.4 L402.0 833.0 L399.4 832.9 L399.4 829.1 L402.0 829.0 L403.0 826.6 L401.2 824.6 L403.8 822.0 L405.8 823.8 L408.2 822.8 Z" fill="#f6f6f6" stroke="#505050" stroke-width="1.5" stroke-linejoin="round"/>
<circle cx="410.2" cy="831" r="3.9" fill="#f3f3f3" stroke="#505050" stroke-width="1.2"/>
<path d="M437.3 822.4 L437.3 831.7 L446.7 831.7 Q448 828.2 451.6 828.1 A3.4 3.4 0 0 1 455.2 831.4 Q455 835.4 449 838.4 L452.8 841.6 Q459.6 838.2 459.4 831.4 A7.9 7.9 0 0 0 451.6 823 Q446.4 822.8 443.1 825.8 Z" fill="url(#bl)" stroke="#2a6a98" stroke-width="0.9" stroke-linejoin="round"/>
<path d="M 490.4 822.4 L 490.4 831.7 L 481.0 831.7 Q 479.7 828.2 476.1 828.1 A 3.4 3.4 0 0 0 472.5 831.4 Q 472.7 835.4 478.7 838.4 L 474.9 841.6 Q 468.1 838.2 468.3 831.4 A 7.9 7.9 0 0 1 476.1 823 Q 481.3 822.8 484.6 825.8 Z" fill="url(#bl2)" stroke="#8fb3c8" stroke-width="0.9" stroke-linejoin="round"/>
<circle cx="517.6" cy="830.8" r="10.8" fill="#f8f8f8" stroke="#505050" stroke-width="1.3"/>
<text x="517.8" y="837.0" font-size="17.5" fill="#2a679a" text-anchor="middle" font-weight="bold">?</text>
<rect x="542.4" y="818.0" width="26.3" height="26.6" fill="#cfe5f2" stroke="#6fadd2" stroke-width="1" rx="2.5"/>
<rect x="554.6" y="820.4" width="12.6" height="11.0" fill="#c3deec" stroke="#2a2a2a" stroke-width="1.3" rx="1.2"/>
<path d="M557 822.8 H560.4 V825.6 H564.8 V829 H557 Z" fill="#4a96c4" stroke="#1f4f70" stroke-width="0.8"/>
<g stroke="#2a2a2a" stroke-width="1.2" stroke-linejoin="round"><path d="M544.8 832.2 L549.6 829 L553 830.2 L553 833.4 L556.4 834.8 L556.4 838.6 L550.8 842 L544.8 839.2 Z" fill="#f6f6f6"/><path d="M544.8 832.2 L548 833.6 L548 836.4 L550.8 837.6 L550.8 842 M548 833.6 L552.6 830.6 M550.8 837.6 L556.4 835 M548 836.4 L553 833.6" fill="none" stroke-width="0.9"/></g>
<path d="M552 821.6 L546.2 825.8 M546 822.4 V826 H549.8" fill="none" stroke="#111" stroke-width="1.6"/>
<path d="M560.2 839.8 L566.4 834.8 M562.6 834.6 H566.6 V838.4" fill="none" stroke="#111" stroke-width="1.6"/>
<rect x="582.6" y="822.0" width="21.4" height="17.4" fill="url(#gy)" stroke="#505050" stroke-width="1.4" rx="1.8"/>
<path d="M597 831.4 H600.8 V835.2 H604.6 V839 H600.8 V842.8 H597 V839 H593.2 V835.2 H597 Z" fill="#4f97c8" stroke="#25628f" stroke-width="1" stroke-linejoin="round"/>
<rect x="614.8" y="821.8" width="21.8" height="17.4" fill="url(#gy2)" stroke="#4a5b67" stroke-width="1.7" rx="1.8"/>
<rect x="616.6" y="823.6" width="18.2" height="13.8" fill="none" stroke="#d5dade" stroke-width="0.7"/>
<path d="M624.4 831.4 H634.4 V837 H624.4 Z" fill="#c6ccd0" stroke="none"/>
<path d="M624.4 834.2 H634.4 M627.8 831.4 V837 M631.2 831.4 V837" fill="none" stroke="#7f8a92" stroke-width="0.8"/>
</g>
</svg>
</body></html>
